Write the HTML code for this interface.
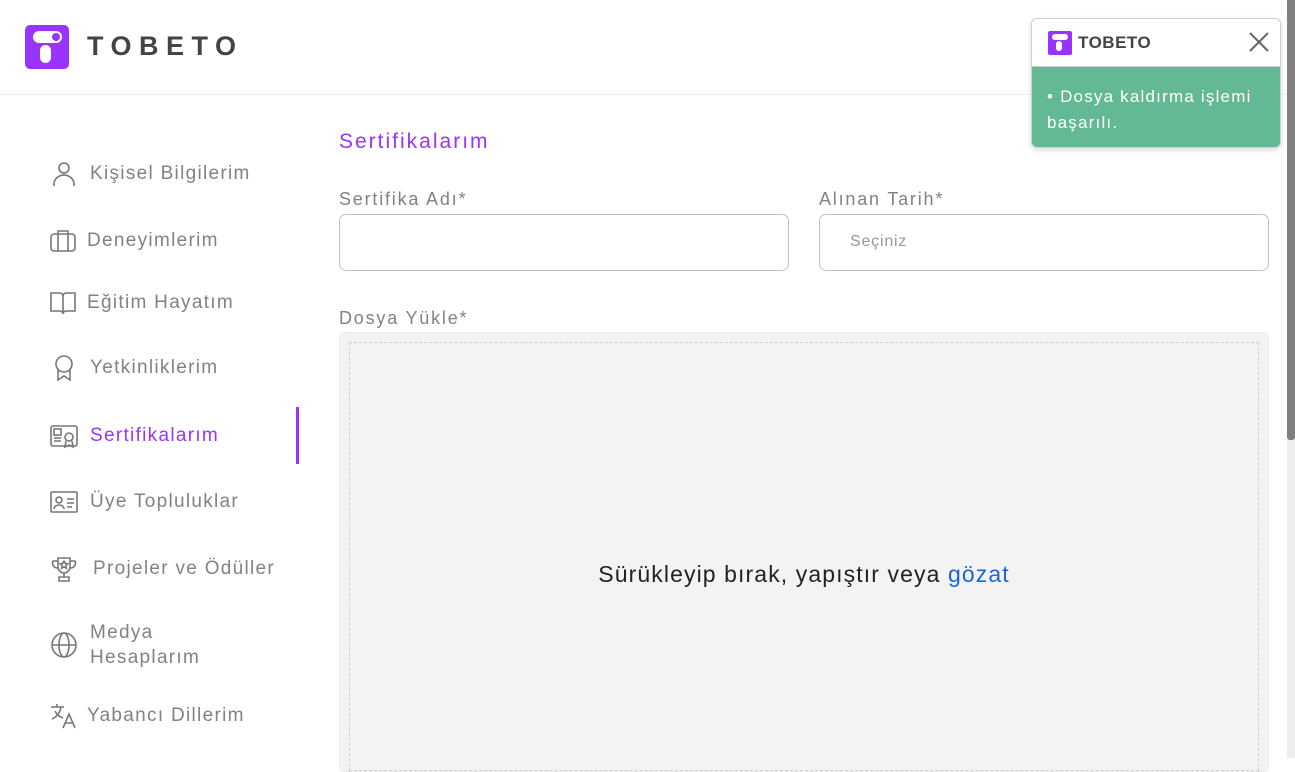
<!DOCTYPE html>
<html><head><meta charset="utf-8"><style>
*{box-sizing:border-box;margin:0;padding:0}
body{width:1295px;height:758px;overflow:hidden;background:#fff;font-family:"Liberation Sans",sans-serif;position:relative}
.hdr{position:absolute;left:0;top:0;width:1287px;height:95px;border-bottom:1px solid #f0eef6}
.logo{position:absolute;left:25px;top:25px;width:44px;height:44px;background:#9933ff;border-radius:5px}
.brand{position:absolute;left:87px;top:31px;font-size:27px;font-weight:bold;letter-spacing:7.5px;color:#444}
.it{position:absolute;left:50px;display:flex;align-items:center;font-size:19px;color:#828282;letter-spacing:1.3px}
.it svg{width:28px;height:28px;margin-right:12px;fill:none;stroke:#777;stroke-width:1.6}
.act{color:#9933ff}
.bar{position:absolute;left:296px;top:407px;width:3px;height:57px;background:#9933ff}
.title{position:absolute;left:339px;top:130px;font-size:21px;color:#9933ff;letter-spacing:2px}
.lbl{position:absolute;font-size:18px;color:#828282;letter-spacing:1.8px}
.inp{position:absolute;height:57px;border:1px solid #c2c2c2;border-radius:7px;font-size:16px;color:#999;padding:18px 30px;letter-spacing:.8px}
.drop{position:absolute;left:339px;top:332px;width:930px;height:440px;background:#f3f3f3;border:1px solid #ececec;border-radius:6px}
.drop .in{position:absolute;left:9px;top:9px;right:9px;bottom:0;border:1px dashed #d0d0d0}
.drop p{position:absolute;left:0;right:0;top:228px;text-align:center;font-size:23px;color:#222;letter-spacing:1.1px}
.toast{position:absolute;left:1031px;top:18px;width:250px;height:130px;border:1px solid #cfcfcf;border-radius:6px;overflow:hidden;box-shadow:0 2px 6px rgba(0,0,0,.15)}
.th{height:48px;background:#fff;border-bottom:1px solid #ccc;position:relative}
.tb{background:#64b995;height:82px;color:#fff;font-size:17px;padding:17px 15px;line-height:26px;letter-spacing:1.2px}
.sb{position:absolute;right:0;top:0;width:8px;height:758px;background:#eee}
.sb div{width:8px;height:440px;background:#808080;border-radius:0 0 3px 3px}
</style></head><body>
<div class="hdr">
<div class="logo"><div style="position:absolute;left:8px;top:6px;width:29px;height:12px;border-radius:6px;background:#fff"></div><div style="position:absolute;left:27px;top:8px;width:8px;height:8px;border-radius:50%;background:#9933ff"></div><div style="position:absolute;left:15px;top:20px;width:11px;height:18px;border-radius:6px;background:#fff"></div></div>
<div class="brand">TOBETO</div>
</div>
<div class="it" style="top:160px"><svg viewBox="0 0 28 28"><circle cx="14" cy="8" r="5"/><path d="M4 26v-2a9 8 0 0 1 20 0v2"/></svg>Kişisel Bilgilerim</div>
<div class="it" style="top:227px;left:49px"><svg viewBox="0 0 28 28" style="margin-right:10px"><rect x="2" y="7" width="24" height="17" rx="3"/><path d="M9 7V4h10v3M9 7v17M19 7v17"/></svg>Deneyimlerim</div>
<div class="it" style="top:289px;left:49px"><svg viewBox="0 0 28 28" style="margin-right:10px"><path d="M2 4h9a3 3 0 0 1 3 3v18a3 3 0 0 0-3-3H2zM26 4h-9a3 3 0 0 0-3 3v18a3 3 0 0 1 3-3h9z"/></svg>Eğitim Hayatım</div>
<div class="it" style="top:354px"><svg viewBox="0 0 28 28"><circle cx="14" cy="10" r="8"/><path d="M8 16v10l6-4 6 4V16"/></svg>Yetkinliklerim</div>
<div class="it act" style="top:422px"><svg viewBox="0 0 28 28"><rect x="1" y="4" width="26" height="20" rx="2"/><rect x="4" y="7" width="7" height="6"/><path d="M4 16h7M4 19h7"/><circle cx="19" cy="15" r="4"/><path d="M16 19l-1 6 4-2 4 2-1-6"/></svg>Sertifikalarım</div>
<div class="it" style="top:488px"><svg viewBox="0 0 28 28"><rect x="1" y="4" width="26" height="20" rx="1"/><circle cx="9" cy="12" r="3"/><path d="M4 21a5 4 0 0 1 10 0M17 11h7M17 15h7M17 19h5"/></svg>Üye Topluluklar</div>
<div class="it" style="top:555px"><svg viewBox="0 0 28 28" style="margin-right:15px"><path d="M8 3h12v9a6 6 0 0 1-12 0zM8 6H3a5 5 0 0 0 5 7M20 6h5a5 5 0 0 1-5 7M14 18v4M9 26h10v-4H9z"/><path d="M14 6l1.2 2.4 2.6.4-1.9 1.8.5 2.6-2.4-1.3-2.4 1.3.5-2.6-1.9-1.8 2.6-.4z"/></svg>Projeler ve Ödüller</div>
<div class="it" style="top:620px;line-height:25px"><svg viewBox="0 0 28 28"><circle cx="14" cy="14" r="12"/><ellipse cx="14" cy="14" rx="5" ry="12"/><path d="M2 14h24"/></svg>Medya<br>Hesaplarım</div>
<div class="it" style="top:702px;left:49px"><svg viewBox="0 0 28 28" style="margin-right:10px"><path d="M2 5h13M8 2v3M12 5c-1 6-5 10-9 12M6 9c2 4 5 6 8 7M14 26l6-14 6 14M16 21h8"/></svg>Yabancı Dillerim</div>
<div class="bar"></div>
<div class="title">Sertifikalarım</div>
<div class="lbl" style="left:339px;top:189px">Sertifika Adı*</div>
<div class="inp" style="left:339px;top:214px;width:450px"></div>
<div class="lbl" style="left:819px;top:189px">Alınan Tarih*</div>
<div class="inp" style="left:819px;top:214px;width:450px">Seçiniz</div>
<div class="lbl" style="left:339px;top:308px">Dosya Yükle*</div>
<div class="drop"><div class="in"></div><p>Sürükleyip bırak, yapıştır veya <span style="color:#1a66d6">gözat</span></p></div>
<div class="toast"><div class="th">
<div style="position:absolute;left:16px;top:12px;width:24px;height:24px;background:#9933ff;border-radius:2px"><div style="position:absolute;left:4px;top:3px;width:16px;height:6px;border-radius:3px;background:#fff"></div><div style="position:absolute;left:8px;top:10px;width:6px;height:10px;border-radius:3px;background:#fff"></div></div>
<div style="position:absolute;left:46px;top:14px;font-size:17px;font-weight:bold;color:#444;letter-spacing:.5px">TOBETO</div>
<svg style="position:absolute;left:217px;top:13px" width="20" height="20" viewBox="0 0 20 20"><path d="M1 1l18 18M19 1L1 19" stroke="#666" stroke-width="2"/></svg>
</div><div class="tb">• Dosya kaldırma işlemi başarılı.</div></div>
<div class="sb"><div></div></div>
</body></html>
